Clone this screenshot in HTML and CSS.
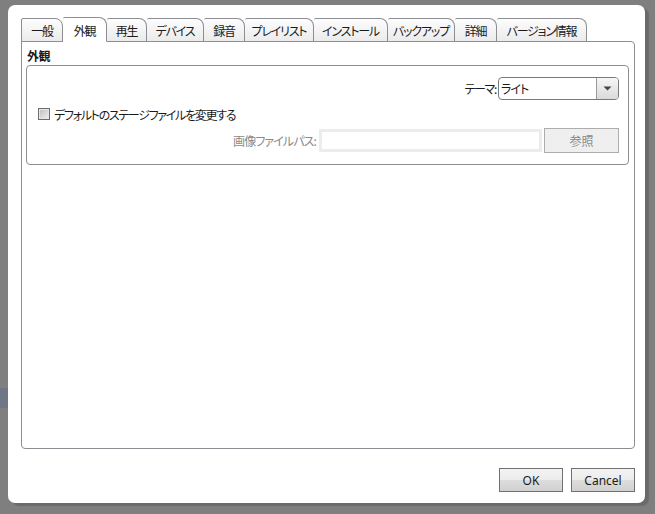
FILE: index.html
```html
<!DOCTYPE html>
<html lang="ja">
<head>
<meta charset="utf-8">
<title>設定</title>
<link rel="stylesheet" href="styles.css">
</head>
<body>
<div class="desktop-mark"></div>
<div class="dialog">
  <div class="tabs">
    <div class="tab w42">一般</div>
    <div class="tab w44 active">外観</div>
    <div class="tab w40">再生</div>
    <div class="tab w57">デバイス</div>
    <div class="tab w41">録音</div>
    <div class="tab w69">プレイリスト</div>
    <div class="tab w74">インストール</div>
    <div class="tab w67">バックアップ</div>
    <div class="tab w42">詳細</div>
    <div class="tab w90">バージョン情報</div>
  </div>
  <div class="panel">
    <div class="section-title">外観</div>
    <div class="group">
      <div class="row theme-row">
        <span class="label">テーマ:</span>
        <div class="combo">
          <span class="combo-text">ライト</span>
          <div class="combo-btn">
            <svg width="9" height="5" viewBox="0 0 9 5"><path d="M0.5 0.5h8l-4 4z" fill="#444"/></svg>
          </div>
        </div>
      </div>
      <label class="row check-row">
        <span class="checkbox"></span>
        <span class="label">デフォルトのステージファイルを変更する</span>
      </label>
      <div class="row path-row">
        <span class="label dim">画像ファイルパス:</span>
        <div class="input"></div>
        <div class="btn-browse">参照</div>
      </div>
    </div>
  </div>
  <div class="footer">
    <button class="btn">OK</button>
    <button class="btn">Cancel</button>
  </div>
</div>
</body>
</html>
```
FILE: styles.css
```css
html, body {
  margin: 0;
  padding: 0;
}
body {
  width: 655px;
  height: 514px;
  background: #7f7f7f;
  font-family: "Noto Sans CJK JP", "Noto Sans", sans-serif;
  font-size: 12px;
  color: #1a1a1a;
  overflow: hidden;
  position: relative;
}
.desktop-mark {
  position: absolute;
  left: 0;
  top: 388px;
  width: 8px;
  height: 20px;
  background: #6f7686;
}
.dialog {
  position: absolute;
  left: 8px;
  top: 5px;
  width: 637px;
  height: 498px;
  box-sizing: border-box;
  background: #fff;
  border-radius: 7px;
  box-shadow: 4px 3px 1px rgba(0, 0, 0, 0.16);
  padding: 13px 10px 11px 13px;
  display: flex;
  flex-direction: column;
}
.tabs {
  display: flex;
  height: 24px;
  position: relative;
  z-index: 1;
}
.tab {
  box-sizing: border-box;
  height: 24px;
  padding: 1px 0 0;
  border: 1px solid #8c8e93;
  border-left: none;
  border-radius: 2px 8px 0 0;
  background: linear-gradient(#fdfdfd, #ebebeb);
  font-feature-settings: "palt";
  letter-spacing: -1.2px;
  line-height: 21px;
  text-align: center;
  white-space: nowrap;
}
.tab:first-child {
  border-left: 1px solid #8c8e93;
}
.w40 { width: 40px; }
.w41 { width: 41px; }
.w42 { width: 42px; }
.w44 { width: 44px; }
.w57 { width: 57px; }
.w67 { width: 67px; }
.w69 { width: 69px; }
.w74 { width: 74px; }
.w90 { width: 90px; }
.tab.active {
  background: #fff;
  border-bottom-color: #fff;
  height: 25px;
  margin-top: -1px;
  padding-top: 2px;
}
.panel {
  flex: 1;
  margin-top: -1px;
  border: 1px solid #8c8e93;
  border-radius: 0 4px 4px 4px;
  padding: 4px 5px 0 4px;
  display: flex;
  flex-direction: column;
}
.section-title {
  font-weight: bold;
  line-height: 19px;
  padding-left: 1px;
  letter-spacing: -0.5px;
}
.group {
  border: 1px solid #8e8e8e;
  border-radius: 4px;
  height: 100px;
  box-sizing: border-box;
  padding: 11px 9px 0 11px;
  display: flex;
  flex-direction: column;
}
.row {
  display: flex;
  align-items: center;
}
.label {
  font-feature-settings: "palt";
  letter-spacing: -1.3px;
  white-space: nowrap;
}
.theme-row {
  justify-content: flex-end;
  height: 23px;
}
.theme-row .label {
  margin-right: 2px;
}
.combo {
  width: 121px;
  height: 23px;
  box-sizing: border-box;
  border: 1px solid #7a7a7a;
  border-radius: 4px;
  display: flex;
  align-items: center;
}
.combo-text {
  flex: 1;
  padding-left: 2px;
  font-feature-settings: "palt";
  letter-spacing: -1px;
}
.combo-btn {
  width: 21px;
  height: 100%;
  border-left: 1px solid #9a9a9a;
  border-radius: 0 3px 3px 0;
  background: linear-gradient(#f6f6f6, #dadada);
  display: flex;
  align-items: center;
  justify-content: center;
}
.check-row {
  height: 14px;
  margin-top: 7px;
}
.checkbox {
  width: 12px;
  height: 12px;
  box-sizing: border-box;
  border: 1px solid #6e6e6e;
  background: linear-gradient(135deg, #bdbdbd, #f2f2f2);
  box-shadow: inset 0 0 0 1px #e6e6e6;
  margin-right: 4px;
}
.path-row {
  justify-content: flex-end;
  margin-top: 7px;
  height: 25px;
}
.dim {
  color: #8a8a8a;
  margin-right: 3px;
  letter-spacing: -0.9px;
}
.input {
  width: 223px;
  height: 23px;
  box-sizing: border-box;
  border: 3px solid #ececec;
  background: #fff;
  margin-right: 2px;
}
.btn-browse {
  width: 75px;
  height: 25px;
  box-sizing: border-box;
  border: 1px solid #adadad;
  background: #efefef;
  color: #8a8a8a;
  display: flex;
  align-items: center;
  justify-content: center;
}
.footer {
  display: flex;
  justify-content: flex-end;
  gap: 8px;
  margin-top: 19px;
}
.btn {
  width: 64px;
  height: 24px;
  margin: 0;
  padding: 0;
  border: 1px solid #707070;
  border-radius: 0;
  background: linear-gradient(#f3f3f3 0%, #ebebeb 50%, #dddddd 51%, #d0d0d0 100%);
  font-family: "Noto Sans", "Open Sans", sans-serif;
  font-size: 12px;
  color: #1a1a1a;
}
```
